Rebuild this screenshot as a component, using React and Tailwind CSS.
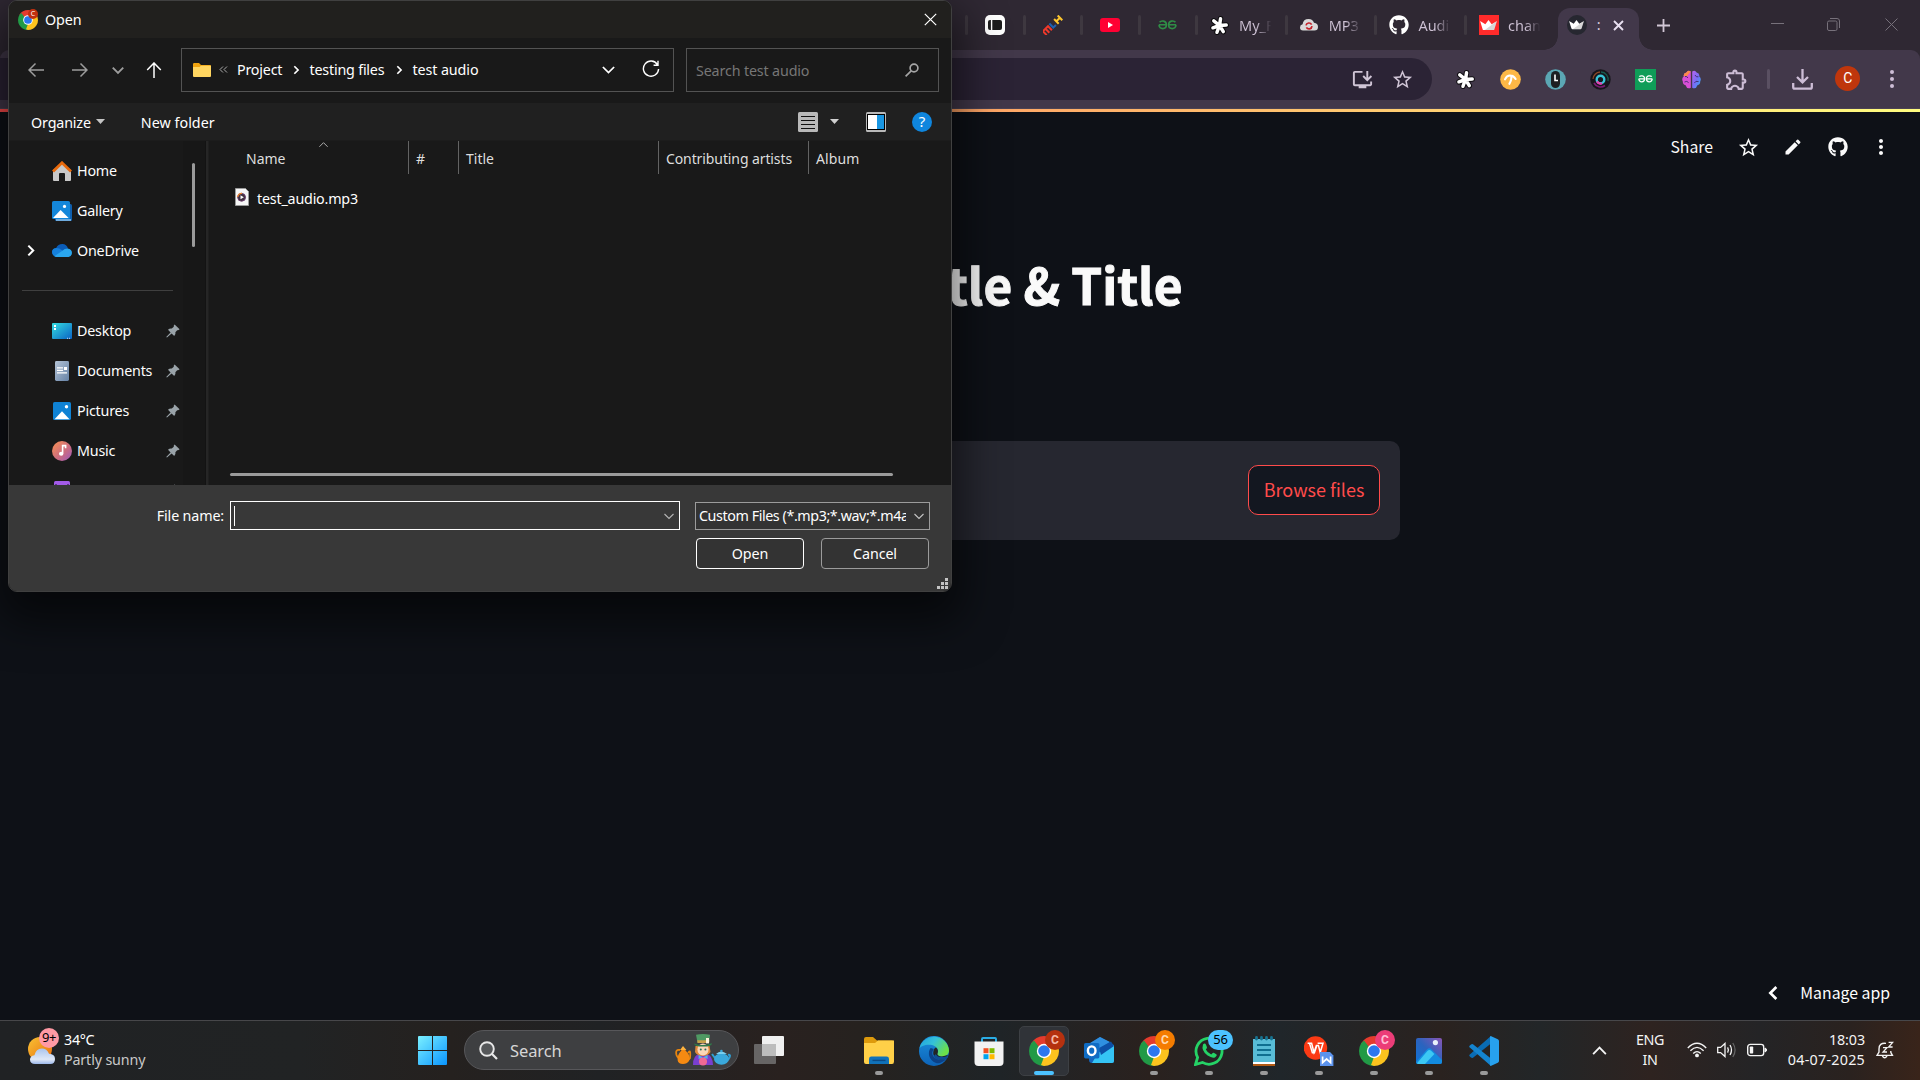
import React from "react";
import { FaGithub } from "react-icons/fa";
import { MdOutlineStarBorder, MdEdit, MdMoreVert, MdOutlineInstallDesktop, MdOutlineExtension } from "react-icons/md";

const ui = "font-['Noto_Sans',sans-serif]";
const src = "font-['Noto_Sans_CJK_SC',sans-serif]";

function Svg({ w, h = w, vb, className = "", children }) {
  return (
    <svg width={w} height={h} viewBox={vb || `0 0 ${w} ${h}`} fill="none" className={`block shrink-0 ${className}`}>
      {children}
    </svg>
  );
}

/* ---------- shared icons ---------- */

function Chrome({ size = 30 }) {
  return (
    <Svg w={size} vb="0 0 30 30">
      <path d="M15 15 L2.01 7.5 A15 15 0 0 1 27.99 7.5 Z" fill="#e33b2e" />
      <path d="M15 15 L27.99 7.5 A15 15 0 0 1 15 30 Z" fill="#fcc31e" />
      <path d="M15 15 L15 30 A15 15 0 0 1 2.01 7.5 Z" fill="#219a46" />
      <path d="M15 8 L28.2 8 L27.6 7 L15 5 Z" fill="#e33b2e" />
      <path d="M21.2 18.5 L15 30 L12 29 L15 21 Z" fill="#fcc31e" />
      <path d="M8.8 18.5 L2.01 7.5 L5 4.5 L10 11 Z" fill="#219a46" />
      <circle cx="15" cy="15" r="7.2" fill="#fff" />
      <circle cx="15" cy="15" r="5.8" fill="#2a77ee" />
    </Svg>
  );
}

function Folder({ w = 18 }) {
  return (
    <Svg w={w} h={(w * 14) / 18} vb="0 0 18 14">
      <path d="M0 1.2Q0 0 1.2 0H6L8 2H17Q18 2 18 3V13H0Z" fill="#f0a30f" />
      <path d="M0 4H6.5L8 2.8H18V13Q18 14 17 14H1Q0 14 0 13Z" fill="#ffd560" />
    </Svg>
  );
}

function Crown({ w = 16, fill = "#fff" }) {
  return (
    <Svg w={w} h={w * 0.62} vb="0 0 16 10">
      <path d="M0 1L5 4L8 0L11 4L16 1L13.5 9Q13.2 10 12.2 10H3.8Q2.8 10 2.5 9Z" fill={fill} />
      <path d="M8 7L16 1L13.5 9Q13.2 10 12.2 10H3.8Z" fill="#000" opacity=".16" />
    </Svg>
  );
}

function Splat({ size = 18 }) {
  return (
    <Svg w={size} vb="0 0 18 18">
      <g stroke="#000" strokeWidth="5.2" strokeLinecap="round" opacity=".75">
        <path d="M9 9L10 2.6M9 9L15.4 8.6M9 9L12.6 14.8M9 9L6.6 15.4M9 9L2.8 11.2M9 9L3.6 4.6" />
      </g>
      <g stroke="#fff" strokeWidth="3.3" strokeLinecap="round">
        <path d="M9 9L10 2.6M9 9L15.4 8.6M9 9L12.6 14.8M9 9L6.6 15.4M9 9L2.8 11.2M9 9L3.6 4.6" />
      </g>
    </Svg>
  );
}

function Geeks({ color, w = 19 }) {
  return (
    <Svg w={w} h={(w * 10) / 19} vb="0 0 19 10">
      <g stroke={color} strokeWidth="1.6">
        <path d="M1 4.8H8.4M1.6 2.2C3 .4 8.4 .2 8.4 4.8C8.4 9.8 1 10 1 4.8" />
        <path d="M18 4.8H10.6M17.4 2.2C16 .4 10.6 .2 10.6 4.8C10.6 9.8 18 10 18 4.8" />
      </g>
    </Svg>
  );
}

function Chev({ dir = "down", w = 12, sw = 1.6, className = "" }) {
  const d = { down: "M1.5 4L6 8.5L10.5 4", up: "M1.5 8.5L6 4L10.5 8.5", right: "M4 1.5L8.5 6L4 10.5", left: "M8.5 1.5L4 6L8.5 10.5" }[dir];
  return (
    <Svg w={w} vb="0 0 12 12" className={className}>
      <path d={d} stroke="currentColor" strokeWidth={sw} />
    </Svg>
  );
}

/* ---------- browser ---------- */

function Tab({ wide, label, children }) {
  return (
    <div className={`flex h-[50px] shrink-0 items-center ${wide ? "w-[89.7px]" : "w-[57.5px]"}`}>
      <div className="h-5 w-[3px] shrink-0 rounded-full bg-[#3e3840]" />
      <div className={`flex w-5 shrink-0 justify-center ${wide ? "ml-[11.5px]" : "ml-[17px]"}`}>{children}</div>
      {label && (
        <span className="ml-[9.5px] w-[34px] bg-[linear-gradient(90deg,#cfc3d6_50%,#cfc3d600_95%)] bg-clip-text text-[14.5px] leading-6 whitespace-nowrap text-transparent">
          {label}
        </span>
      )}
    </div>
  );
}

function TabStrip() {
  return (
    <div className="flex h-[50px] bg-[#2f2833] pl-[965px]">
      <Tab>
        <Svg w={20}>
          <rect width="20" height="20" rx="5" fill="#fff" />
          <rect x="3" y="5" width="14" height="10" rx="2" fill="#1c1c1c" />
          <path d="M6.6 5V15" stroke="#fff" strokeWidth="1.4" />
        </Svg>
      </Tab>
      <Tab>
        <Svg w={20}>
          <g transform="rotate(-44 10 10)" strokeWidth="2">
            <path d="M-1.6 13V7.4H5.6V13M2 7.4V13" stroke="#f0392b" />
            <path d="M8.4 6.4V12H12.2" stroke="#1d5fb0" />
            <path d="M15 6.4V13M20 6.4V13M15 9.7H20" stroke="#fdc62e" />
          </g>
        </Svg>
      </Tab>
      <Tab>
        <Svg w={20} h={14}>
          <rect width="20" height="14" rx="3" fill="#ff0033" />
          <path d="M8 4L13 7L8 10Z" fill="#fff" />
        </Svg>
      </Tab>
      <Tab><Geeks color="#2f8d46" /></Tab>
      <Tab wide label="My_F"><Splat size={19} /></Tab>
      <Tab wide label="MP3">
        <Svg w={20} h={14}>
          <path d="M4 12.5Q1 12.3 1 9.4Q1 6.8 3.6 6.2Q4.2 1 9.6 1Q13.8 1 15 4.8Q19 5.4 19 9Q19 12.5 15.4 12.5Z" fill="#d9d9d9" />
          <path d="M7 7.4A3 3 0 0 1 12.6 6.6M13 8.2A3 3 0 0 1 7.4 9.4" stroke="#c4232a" strokeWidth="1.7" />
        </Svg>
      </Tab>
      <Tab wide label="Audi"><FaGithub className="block size-5 text-white" /></Tab>
      <Tab wide label="chan">
        <div className="flex size-5 items-center justify-center bg-[#ff2b2b]"><Crown w={17} /></div>
      </Tab>
      <div className="-ml-[10px] flex h-full w-[110px] shrink-0 items-end">
        <div className="size-[14px] bg-[radial-gradient(circle_at_0_0,#2f2833_13.5px,#42384a_14px)]" />
        <div className="flex h-[42px] w-[81px] items-center rounded-t-[12px] bg-[#42384a] pb-[8px]">
          <div className="ml-[9px] flex size-5 shrink-0 items-center justify-center rounded-full bg-[#262730]"><Crown w={15} /></div>
          <span className="ml-[10px] w-[5px] text-[14.5px] text-[#d8cddf]">:</span>
          <Svg w={11} className="ml-[11.5px]">
            <path d="M1 1L10 10M10 1L1 10" stroke="#e8dff0" strokeWidth="1.9" />
          </Svg>
        </div>
        <div className="size-[14px] bg-[radial-gradient(circle_at_100%_0,#2f2833_13.5px,#42384a_14px)]" />
      </div>
      <Svg w={13} className="mt-[18.5px] ml-[3.5px]">
        <path d="M6.5 0V13M0 6.5H13" stroke="#d2c7d6" strokeWidth="1.8" />
      </Svg>
      <div className="mr-[22px] ml-auto flex h-[49px] items-center text-[#77717b]">
        <Svg w={13}><path d="M0 5.5H13" stroke="currentColor" /></Svg>
        <Svg w={13} className="ml-[43px]">
          <rect x=".5" y="3" width="9.5" height="9.5" rx="1.5" stroke="currentColor" />
          <path d="M3 .5H10Q12.5 .5 12.5 3V10" stroke="currentColor" />
        </Svg>
        <Svg w={13} className="ml-[45px]"><path d="M.5 .5L12.5 12.5M12.5 .5L.5 12.5" stroke="currentColor" /></Svg>
      </div>
    </div>
  );
}

function Slot({ children }) {
  return <div className="flex w-[45.2px] shrink-0 items-center justify-center">{children}</div>;
}

function AddressRow() {
  return (
    <div className="bg-[#2f2833]">
      <div className="flex h-[59px] items-center rounded-t-[9px] border-b border-[#4c4353] bg-[#42384a]">
        <div className="flex h-[42px] w-[1432px] shrink-0 items-center justify-end rounded-r-full bg-[#2b2335] pr-[18px] text-[#d0c5d6]">
          <MdOutlineInstallDesktop className="mr-[17px] size-[23px]" />
          <MdOutlineStarBorder className="size-[23px]" />
        </div>
        <div className="ml-[10.5px] flex">
          <Slot><Splat size={19} /></Slot>
          <Slot>
            <Svg w={21}>
              <circle cx="10.5" cy="10.5" r="10.3" fill="#fdb846" />
              <path d="M5 10.4Q7 6.2 10.6 6.6Q13.6 6.6 15.6 10M11.2 7Q12 10 9.4 14.8" stroke="#fff" strokeWidth="2.1" strokeLinecap="round" />
            </Svg>
          </Slot>
          <Slot>
            <Svg w={21}>
              <circle cx="10.5" cy="10.5" r="10.3" fill="#5ba7b4" />
              <rect x="6" y="2" width="9" height="17" rx="4.5" fill="#1d1f22" />
              <path d="M10 5.5V11.5H13" stroke="#fff" strokeWidth="1.6" />
            </Svg>
          </Slot>
          <Slot>
            <Svg w={21}>
              <circle cx="10.5" cy="10.5" r="10.2" fill="#17161c" />
              <path d="M3 10A7.5 7.5 0 0 1 10 3" stroke="#8a4726" strokeWidth="1.3" />
              <path d="M11 3A7.5 7.5 0 0 1 18 12" stroke="#17594f" strokeWidth="1.3" />
              <path d="M4 14A7.5 7.5 0 0 0 15 16.5" stroke="#7a1c74" strokeWidth="1.6" />
              <circle cx="10.5" cy="10.5" r="3.8" stroke="#38c6d8" strokeWidth="2.4" />
              <path d="M7 12.4A4 4 0 0 0 12 14.2" stroke="#e43fb0" strokeWidth="2.2" />
            </Svg>
          </Slot>
          <Slot>
            <div className="flex size-[21px] items-center justify-center bg-[#0f9d58]"><Geeks color="#fff" w={15} /></div>
          </Slot>
          <Slot>
            <Svg w={19}>
              <defs>
                <linearGradient id="brain" x1="0" y1="0" x2="1" y2="1">
                  <stop offset="0" stopColor="#b865f0" /><stop offset=".5" stopColor="#7a6cf5" /><stop offset="1" stopColor="#26b6f0" />
                </linearGradient>
              </defs>
              <path d="M8.8 1.5Q6 -.6 4.4 2.4Q1.2 3 1.8 6.2Q-.8 8.6 .8 11.4Q.6 14.6 3.6 15.2Q5 19.6 8.8 17.8Z" fill="#d94fd6" />
              <path d="M1.8 6.2Q1.2 3 4.4 2.4Q6 -.6 8.8 1.5L5 6Z" fill="#fb8a4a" />
              <path d="M10.2 1.5Q13 -.6 14.6 2.4Q17.8 3 17.2 6.2Q19.8 8.6 18.2 11.4Q18.4 14.6 15.4 15.2Q14 19.6 10.2 17.8Z" fill="url(#brain)" />
              <path d="M3 6.5Q5 6 6 8M2.5 12Q5 10.5 6.6 12.6M13 5Q14 7.5 16.4 6.8M12.4 13Q13.4 10.4 16.6 11.6" stroke="#3b2c6b" strokeWidth=".9" />
            </Svg>
          </Slot>
          <Slot><MdOutlineExtension className="size-[25px] text-[#cdbdd6]" /></Slot>
        </div>
        <div className="ml-[8.5px] h-5 w-[3px] rounded-full bg-[#5a5062]" />
        <Svg w={21} className="ml-[22px] text-[#cdbdd6]">
          <path d="M10.5 0V13M5 8L10.5 13.3L16 8M1.2 14V18Q1.2 19.7 2.8 19.7H18.2Q19.8 19.7 19.8 18V14" stroke="currentColor" strokeWidth="2.3" />
        </Svg>
        <div className="mb-[2px] ml-[22px] flex size-[25px] items-center justify-center rounded-full bg-[#bf360c] font-[Roboto,sans-serif] text-sm leading-none text-white">C</div>
        <Svg w={6} h={20} className="mb-px ml-[29px]">
          <g fill="#cdbdd6"><circle cx="3" cy="3" r="2" /><circle cx="3" cy="10" r="2" /><circle cx="3" cy="17" r="2" /></g>
        </Svg>
      </div>
    </div>
  );
}

function StreamlitPage() {
  return (
    <div className={`flex h-[911px] flex-col bg-[#0e1117] ${src}`}>
      <div className="h-[3px] shrink-0 bg-[linear-gradient(90deg,#ff4b4b,#fffd80)]" />
      <div className="flex h-[70px] items-center justify-end pr-[27px] text-[#fafafa]">
        <span className="mr-[24px] text-[15.8px] leading-6">Share</span>
        <MdOutlineStarBorder className="mr-[23px] size-[23px]" />
        <MdEdit className="mr-[25px] size-[20px]" />
        <FaGithub className="mr-[21px] size-[20px]" />
        <MdMoreVert className="size-[24px]" />
      </div>
      <h1 className="mt-[72px] ml-[947px] text-[49.5px] leading-[60px] font-bold whitespace-nowrap text-[#fafafa] [-webkit-text-stroke:1px_#fafafa]">tle &amp; Title</h1>
      <div className="mt-[127px] ml-[520px] flex h-[99px] w-[880px] shrink-0 items-center justify-end rounded-[10px] bg-[#262730] pr-5">
        <button className="-mt-px h-[50px] w-[132px] rounded-[10px] border border-[#ff4b4b] bg-[#131720] pb-[3px] text-[18px] leading-6 text-[#ff4b4b]">Browse files</button>
      </div>
      <div className="mt-auto mr-[30px] mb-[12px] flex h-[30px] items-center justify-end text-white">
        <Chev dir="left" w={16} sw={2} className="mr-[19px]" />
        <span className="text-[15.8px] leading-6">Manage app</span>
      </div>
    </div>
  );
}

/* ---------- file dialog ---------- */

function HomeIcon() {
  return (
    <Svg w={20}>
      <path d="M1 9L10 2L19 9V19Q19 20 18 20H13V13Q13 12 12 12H8Q7 12 7 13V20H2Q1 20 1 19Z" fill="#c9c9c9" />
      <path d="M1 10.5L10 1.8L19 10.5" stroke="#e8690b" strokeWidth="2.8" />
    </Svg>
  );
}

function PictureIcon({ size = 18 }) {
  return (
    <Svg w={size} vb="0 0 18 18">
      <rect width="18" height="18" rx="1.6" fill="#0f82d4" />
      <path d="M1.5 17.3L9 9.2L16.5 17.3Z" fill="#fff" />
      <circle cx="13.5" cy="4.8" r="1.7" fill="#fff" />
    </Svg>
  );
}

function GalleryIcon() {
  return (
    <Svg w={20}>
      <rect x="3" y="3" width="17" height="17" rx="1.5" fill="#0f5fae" />
      <path d="M4 19H19" stroke="#8fc4ee" strokeWidth="1.6" />
      <rect width="18" height="18" rx="1.6" fill="#1487da" />
      <path d="M1 17L8.6 9L16.6 17Z" fill="#fff" />
      <circle cx="12.5" cy="5.4" r="1.6" fill="#fff" />
    </Svg>
  );
}

function OneDriveIcon() {
  return (
    <Svg w={20} h={13} className="-mt-px">
      <path d="M4 12Q0 11.5 0 8Q.3 4.6 4 4.2Q6 0 10.4 0Q14.6 .2 16 4.4L10 9Z" fill="#0a5cb8" />
      <path d="M0 8Q.3 4.2 4.4 4Q7.4 4 9.6 6L15 9.4L4.6 13Q.4 12.6 0 8Z" fill="#1580dc" />
      <path d="M2.4 12.2L10.4 6.8Q12.4 4.4 15.6 4.4Q20 5 20 9Q19.6 12.6 16.6 13H4.4Q3.2 13 2.4 12.2Z" fill="#2aa6ee" />
    </Svg>
  );
}

function DesktopIcon() {
  return (
    <Svg w={20} h={16}>
      <defs><linearGradient id="desk" x1="0" y1="0" x2="1" y2="1"><stop stopColor="#35dde0" /><stop offset="1" stopColor="#0a62c4" /></linearGradient></defs>
      <rect width="20" height="16" rx="1" fill="url(#desk)" />
      <path d="M2 2H4V4H2ZM2 5H4V7H2Z" fill="#fff" />
      <path d="M15 15.3H16M17 15.3H18" stroke="#cde" />
    </Svg>
  );
}

function DocIcon() {
  return (
    <Svg w={14} h={20}>
      <defs><linearGradient id="doc" x1="0" y1="0" x2="1" y2="1"><stop stopColor="#b4c3d6" /><stop offset="1" stopColor="#6582a6" /></linearGradient></defs>
      <rect width="14" height="20" rx="1.4" fill="url(#doc)" />
      <path d="M2 6.8H8M2 9.3H8M2 11.8H12" stroke="#fff" strokeWidth="1.2" />
      <rect x="9" y="6" width="3" height="3" fill="#fff" />
    </Svg>
  );
}

function MusicIcon() {
  return (
    <Svg w={20}>
      <defs><linearGradient id="mus" x1="0" y1="0" x2="1" y2="1"><stop stopColor="#fa9150" /><stop offset=".6" stopColor="#c96b83" /><stop offset="1" stopColor="#9a57c0" /></linearGradient></defs>
      <circle cx="10" cy="10" r="10" fill="url(#mus)" />
      <path d="M10.6 12.5V4.6H13.6V7.2" stroke="#fff" strokeWidth="1.6" />
      <ellipse cx="9.2" cy="12.8" rx="2.2" ry="2" fill="#fff" />
    </Svg>
  );
}

function VideoIcon() {
  return (
    <Svg w={16} h={20}>
      <rect width="16" height="20" rx="1.5" fill="#a35be8" />
      <path d="M2 3V18M14 3V18" stroke="#4f2a7a" strokeWidth="1.6" strokeDasharray="2 2" />
    </Svg>
  );
}

function Pin() {
  return (
    <Svg w={14}>
      <path d="M8.6 .4L13.6 5.2Q12.6 6.4 11.2 6.2L9.4 8.2Q10 10.4 8.2 12L5.6 9.4L1 13.6L.2 13L4.6 8.4L2 5.8Q3.6 4.2 5.8 4.6L7.8 2.8Q7.4 1.4 8.6 .4Z" fill="#9aa3a9" />
    </Svg>
  );
}

function NavItem({ icon, label, pin, expand }) {
  return (
    <div className="flex h-10 shrink-0 items-center pr-[3px]">
      <div className="flex w-[39px] pl-[11px] text-white">{expand && <Chev dir="right" w={13} sw={1.9} />}</div>
      <div className="flex w-5 justify-center">{icon}</div>
      <span className="ml-[5px] text-[14.3px] leading-5 tracking-[-0.2px] text-[#fdfdfd]">{label}</span>
      {pin && <div className="ml-auto"><Pin /></div>}
    </div>
  );
}

function Column({ label, w, pad, sort, track = "" }) {
  return (
    <div className={`flex h-[33px] shrink-0 flex-col border-r border-[#636363] ${w} ${pad}`}>
      <div className="flex h-[6px] justify-end">
        {sort && <Chev dir="up" w={11} sw={1} className="mt-[-2px] mr-[79px] text-[#b8b8b8]" />}
      </div>
      <span className={`mt-[2px] text-[14px] leading-5 whitespace-nowrap text-[#dedede] ${track}`}>{label}</span>
    </div>
  );
}

function Dialog() {
  return (
    <div className={`absolute top-0 left-2 flex h-[592px] w-[944px] flex-col overflow-hidden rounded-[9px] border border-[#404040] bg-[#191919] shadow-[0_20px_44px_10px_rgba(0,0,0,0.55)] ${ui}`}>
      <div className="flex h-[37px] shrink-0 items-center bg-[#21201e] pr-[14.5px] pl-[9px]">
        <div className="relative">
          <Chrome size={20} />
          <div className="absolute -top-px left-[10px] flex size-[10px] items-center justify-center rounded-full bg-[#c2300f] text-[7px] leading-none text-white">C</div>
        </div>
        <span className="ml-[7px] text-[14.3px] tracking-[-0.1px] text-white">Open</span>
        <Svg w={13} className="ml-auto"><path d="M.8 .8L12.2 12.2M12.2 .8L.8 12.2" stroke="#fff" strokeWidth="1.2" /></Svg>
      </div>

      <div className="flex h-[65px] shrink-0 items-center pr-[12px] pb-px pl-[19px]">
        <Svg w={16} className="text-[#9d9d9d]"><path d="M16 8H1M7.5 1.5L1 8L7.5 14.5" stroke="currentColor" strokeWidth="1.5" /></Svg>
        <Svg w={16} className="ml-[28px] text-[#9d9d9d]"><path d="M0 8H15M8.5 1.5L15 8L8.5 14.5" stroke="currentColor" strokeWidth="1.5" /></Svg>
        <Chev w={14} sw={1.6} className="ml-[23px] text-[#9d9d9d]" />
        <Svg w={16} className="ml-[21px] text-white"><path d="M8 16V1M1.2 8L8 1L14.8 8" stroke="currentColor" strokeWidth="1.5" /></Svg>
        <div className="ml-[19px] flex h-[44px] w-[493px] shrink-0 items-center border border-[#535353] pr-[13px] pb-px pl-[11px] text-[14.3px] text-white">
          <Folder />
          <Svg w={9} h={7} className="ml-[8px]"><path d="M4 .5L1 3.5L4 6.5M8 .5L5 3.5L8 6.5" stroke="#aaa" /></Svg>
          <span className="ml-[9px] w-[47px] tracking-[-0.2px] whitespace-nowrap">Project</span>
          <Chev dir="right" w={10} sw={2} className="ml-[7px]" />
          <span className="ml-[8.5px] w-[76px] tracking-[-0.2px] whitespace-nowrap">testing files</span>
          <Chev dir="right" w={10} sw={2} className="ml-[8px]" />
          <span className="ml-[9px] tracking-[-0.1px] whitespace-nowrap">test audio</span>
          <Chev w={15} sw={1.4} className="ml-auto" />
          <Svg w={18} className="mb-px ml-[26px]">
            <path d="M15.4 4.5A7.6 7.6 0 1 0 16.6 9M16 .8V5.2H11.6" stroke="#fff" strokeWidth="1.4" />
          </Svg>
        </div>
        <div className="ml-auto flex h-[44px] w-[253px] items-center border border-[#535353] pr-[19px] pl-[9px]">
          <span className="pt-px text-[14.3px] tracking-[-0.15px] text-[#767676]">Search test audio</span>
          <Svg w={14} className="ml-auto"><circle cx="9" cy="5" r="3.9" stroke="#a5a5a5" strokeWidth="1.7" /><path d="M6.2 7.8L.6 13.4" stroke="#a5a5a5" strokeWidth="1.7" /></Svg>
        </div>
      </div>

      <div className="flex h-[38px] shrink-0 items-center border-b border-[#1c1c1c] bg-[#202020] pr-[19px] pl-[22px] text-[14.3px] text-white">
        <span className="pt-[2px] tracking-[-0.15px]">Organize</span>
        <Svg w={9} h={5} className="ml-[5px]"><path d="M0 0H9L4.5 5Z" fill="#c4c4c4" /></Svg>
        <span className="ml-[36px] pt-[2px] tracking-[0.02px]">New folder</span>
        <Svg w={20} className="ml-auto">
          <rect width="20" height="20" rx="1.5" fill="#b9b9b9" />
          <path d="M3 4.5H17M3 8.5H17M3 12.5H17M3 16.5H17" stroke="#111" />
        </Svg>
        <Svg w={9} h={5} className="ml-[12px]"><path d="M0 0H9L4.5 5Z" fill="#d0d0d0" /></Svg>
        <Svg w={20} className="ml-[27px]">
          <rect width="20" height="20" rx="1.5" fill="#b9b9b9" />
          <rect x="1.5" y="2.5" width="17" height="15" fill="#fff" stroke="#000" />
          <rect x="11" y="3" width="7" height="14" fill="#1996e2" />
        </Svg>
        <div className="ml-[26px] flex size-5 items-center justify-center rounded-full bg-[#0f86de] text-[15px] leading-none text-white">?</div>
      </div>

      <div className="flex h-[344px] shrink-0">
        <div className="flex h-full w-[174px] shrink-0 flex-col overflow-hidden pt-[9.5px] pl-[4px]">
          <NavItem icon={<HomeIcon />} label="Home" />
          <NavItem icon={<GalleryIcon />} label="Gallery" />
          <NavItem icon={<OneDriveIcon />} label="OneDrive" expand />
          <div className="flex h-10 shrink-0 items-center"><div className="mb-px ml-[9px] h-px w-[151px] bg-[#3f3f3f]" /></div>
          <NavItem icon={<DesktopIcon />} label="Desktop" pin />
          <NavItem icon={<DocIcon />} label="Documents" pin />
          <NavItem icon={<PictureIcon />} label="Pictures" pin />
          <NavItem icon={<MusicIcon />} label="Music" pin />
          <NavItem icon={<VideoIcon />} label="" pin />
        </div>
        <div className="h-full w-[22px] shrink-0 bg-[#171717] pt-[22px] pl-[9px]"><div className="h-[84px] w-[3px] rounded-full bg-[#9a9a9a]" /></div>
        <div className="h-full w-[4px] shrink-0 border-x border-l-[#131313] border-r-[#1f1f1f] bg-[#262626]" />
        <div className="flex min-w-0 flex-1 flex-col">
          <div className="flex">
            <Column label="Name" w="w-[200px]" pad="pl-[37px]" sort />
            <Column label="#" w="w-[50px]" pad="pl-[7px]" />
            <Column label="Title" w="w-[200px]" pad="pl-[7px]" />
            <Column label="Contributing artists" w="w-[150px]" pad="pl-[7px]" track="tracking-[-0.1px]" />
            <span className="mt-[8px] ml-[7px] text-[14px] leading-5 tracking-[0.1px] text-[#dedede]">Album</span>
          </div>
          <div className="mt-[13px] flex h-[22px] items-center pl-[26px]">
            <Svg w={14} h={18} className="-mt-[2px]">
              <path d="M.5 .5H10.5L13.5 3.5V17.5H.5Z" fill="#f6f6f6" stroke="#9a9a9a" />
              <circle cx="6.6" cy="9.3" r="3.9" fill="#41323f" stroke="#6b3f6e" strokeWidth="1" />
              <path d="M2.7 9A3.9 3.9 0 0 1 7 5.4" stroke="#e9822d" strokeWidth="1.3" />
              <path d="M5.5 7.3L8.9 9.3L5.5 11.3Z" fill="#fff" />
            </Svg>
            <span className="ml-[8px] pt-[2px] text-[14.3px] tracking-[-0.2px] text-white">test_audio.mp3</span>
          </div>
          <div className="mt-auto mb-[9px] ml-[21px] h-[3px] w-[663px] rounded-full bg-[#9a9a9a]" />
        </div>
      </div>

      <div className="flex min-h-0 flex-1 flex-col bg-[#383838] pt-[16px] text-[14.3px] text-white">
        <div className="flex h-[29px] shrink-0 items-center">
          <span className="w-[215px] text-right tracking-[-0.15px]">File name:</span>
          <div className="ml-[6px] flex h-[29px] w-[450px] items-center justify-between border border-white pr-[4px] pl-[3px]">
            <div className="h-5 w-px bg-white" />
            <Chev w={12} sw={1.1} className="text-[#b5b5b5]" />
          </div>
          <div className="ml-[15px] flex h-[28px] w-[235px] items-center justify-between border border-[#9b9b9b] bg-[#333] pr-[4px] pl-[3px]">
            <span className="w-[207px] overflow-hidden tracking-[-0.42px] whitespace-nowrap">Custom Files (*.mp3;*.wav;*.m4a</span>
            <Chev w={12} sw={1.1} className="text-[#c5c5c5]" />
          </div>
        </div>
        <div className="mt-[8px] flex shrink-0 pl-[687px]">
          <button className="h-[31px] w-[108px] rounded-[4px] border border-white bg-[#333] tracking-[-0.1px]">Open</button>
          <button className="ml-[17px] h-[31px] w-[108px] rounded-[4px] border border-[#9b9b9b] bg-[#333] tracking-[-0.1px]">Cancel</button>
        </div>
        <Svg w={11} className="mt-[9px] ml-[928px]">
          <path d="M8 0h3v3h-3zM4 4h3v3h-3zM8 4h3v3h-3zM0 8h3v3h-3zM4 8h3v3h-3zM8 8h3v3h-3z" fill="#c4c4c4" />
        </Svg>
      </div>
    </div>
  );
}

/* ---------- taskbar ---------- */

function Task({ active, running, children }) {
  return (
    <div className="flex w-[55px] shrink-0 justify-center">
      <div className={`flex h-[50px] w-[50px] flex-col items-center rounded-[5px] ${active ? "border border-[#3d4044] bg-[#303338] pt-[9px]" : "pt-[10px]"}`}>
        <div className="relative flex h-[30px] w-[30px] items-center justify-center">{children}</div>
        {(active || running) && <div className={`mt-[5px] h-[4px] shrink-0 rounded-full ${active ? "w-5 bg-[#4cc2ff]" : "w-2 bg-[#9a9a9a]"}`} />}
      </div>
    </div>
  );
}

function Badge({ className, children }) {
  return <div className={`absolute -top-[6px] left-[16px] flex h-5 items-center justify-center rounded-full leading-none ${className}`}>{children}</div>;
}

function HatterArt() {
  return (
    <Svg w={56} h={32}>
      <path d="M5 16Q0 15 1.5 21Q3 25 6 25M13 19Q16 14 15 24L13 26" stroke="#e8850e" strokeWidth="1.8" />
      <path d="M8 13L11 17Q16 22 14 27Q12 30 8 30Q3 30 2.6 26Q2.6 20 6 17Z" fill="#f58a12" />
      <path d="M5 16L8 12L11.4 16Z" fill="#ffb23d" />
      <path d="M37 20L40 24M53 21Q57 20 53 26" stroke="#2f9fd4" strokeWidth="2" />
      <ellipse cx="46.5" cy="25" rx="7.5" ry="5.8" fill="#3aa9dc" />
      <path d="M41 20Q46 15 52 20Z" fill="#7bd0ee" /><circle cx="46.4" cy="17" r="1.3" fill="#3aa9dc" />
      <path d="M18 31Q18 21 24 20.5H32Q37.5 21 38 31Z" fill="#7a3fd0" />
      <path d="M20.5 12H34.5L35.5 18Q33 22 28 22Q22 22 20 18Z" fill="#e08a3c" />
      <ellipse cx="28" cy="15.6" rx="5.6" ry="6" fill="#fbd7b8" />
      <circle cx="25.8" cy="15.4" r="1" fill="#2c6b5b" /><circle cx="30.4" cy="15.4" r="1" fill="#2c6b5b" />
      <path d="M21 .8Q28 -.6 35 .8L34 9H22.6Z" fill="#4f9a63" />
      <path d="M22.2 6.2H34.4L34 9H22.6Z" fill="#c9a04a" />
      <path d="M19 9.4Q28 12.6 37 9.2Q37 12.6 28 12.6Q20 12.6 19 9.4Z" fill="#2f7a4a" />
      <path d="M31 4H34V9.4H31Z" fill="#fff3da" />
      <path d="M23.6 21L28 23.4L32.6 21V25L28 23.6L23.6 25Z" fill="#4fb5e8" />
      <circle cx="28" cy="27.6" r="4" fill="#ef6a94" />
    </Svg>
  );
}

function Taskbar() {
  return (
    <div className={`flex h-[60px] items-center border-t border-[#47474a] bg-[linear-gradient(90deg,#202224_0px,#212324_300px,#25211f_450px,#202224_600px,#29211f_780px,#26221f_860px,#1f2427_1000px,#2a211e_1150px,#20262a_1280px,#2a221f_1440px,#222628_1540px,#2e2320_1650px,#242426_1760px,#2a221f_1850px,#39241a_1920px)] pb-px ${ui}`}>
      <div className="flex w-[418px] shrink-0 items-center pl-[28px]">
        <div className="relative mt-px">
          <Svg w={27} h={27}>
            <defs>
              <linearGradient id="sun" x1="0" y1="0" x2="1" y2="1"><stop stopColor="#f8c234" /><stop offset="1" stopColor="#ea6d0e" /></linearGradient>
              <linearGradient id="cloud" x1="0" y1="0" x2="0" y2="1"><stop stopColor="#a9c4ee" /><stop offset=".7" stopColor="#dfe8f7" /><stop offset="1" stopColor="#9cb8ea" /></linearGradient>
            </defs>
            <circle cx="12" cy="12" r="12" fill="url(#sun)" />
            <path d="M7 27Q2 27 2 22.6Q2 18.8 6.4 18.2Q8 11.4 13.8 11.4Q19 11.4 21 16.8Q27 17 27 22Q27 27 22.4 27Z" fill="url(#cloud)" />
          </Svg>
          <div className="absolute -top-[9px] left-[11px] flex size-5 items-center justify-center rounded-full bg-[#ff99a4] text-[13px] tracking-[-0.5px] text-black">9+</div>
        </div>
        <div className="ml-[9px] flex flex-col pb-px text-[14.3px] leading-5 whitespace-nowrap">
          <span className="tracking-[-0.3px] text-white">34°C</span>
          <span className="tracking-[-0.15px] text-[#c9c9c9]">Partly sunny</span>
        </div>
      </div>
      <Svg w={29} className="mt-px">
        <defs><linearGradient id="win" x1="0" y1="0" x2="1" y2="1"><stop stopColor="#7bf0ff" /><stop offset="1" stopColor="#0a95ff" /></linearGradient></defs>
        <path d="M1 0H14V14H0V1Q0 0 1 0ZM15 0H28Q29 0 29 1V14H15ZM0 15H14V29H1Q0 29 0 28ZM15 15H29V28Q29 29 28 29H15Z" fill="url(#win)" />
      </Svg>
      <div className="ml-[17px] flex h-[40px] w-[275px] shrink-0 items-center rounded-full border border-[#57575a] bg-[#3e3f41] pr-[7px] pl-[14px]">
        <Svg w={19}><circle cx="8" cy="8" r="6.8" stroke="#e8e8e8" strokeWidth="1.9" fill="#56585a" /><path d="M12.8 12.8L18 18" stroke="#e8e8e8" strokeWidth="2.2" /></Svg>
        <span className="ml-[12px] pt-px text-[16.5px] leading-5 tracking-[-0.1px] text-[#d6d6d6]">Search</span>
        <div className="ml-auto"><HatterArt /></div>
      </div>
      <Svg w={30} h={28} className="ml-[15px]">
        <rect x="8" width="22" height="20" rx="1" fill="#f0f0f0" />
        <rect y="8" width="22" height="20" rx="1" fill="#777" opacity=".8" />
        <rect x="8" y="8" width="14" height="12" fill="#bdbdbd" />
      </Svg>
      <div className="mt-px ml-[67.5px] flex">
        <Task running>
          <Svg w={30} h={27}>
            <path d="M0 2Q0 0 2 0H9L13 3.6H28Q30 3.6 30 6V20H0Z" fill="#dd9a0c" />
            <path d="M0 6H11L14 3.6H30V24.5Q30 27 28 27H2Q0 27 0 25Z" fill="#ffd048" />
            <path d="M5 27V22Q5 19.6 7.4 19.6H22.6Q25 19.6 25 22V27Z" fill="#1172b9" />
            <path d="M8.5 23.4H21.5" stroke="#0b4a85" strokeWidth="1.4" />
          </Svg>
        </Task>
        <Task>
          <Svg w={30}>
            <defs>
              <linearGradient id="e1" x1="0" y1="0" x2="1" y2=".5"><stop stopColor="#1fa0e0" /><stop offset=".5" stopColor="#35c1d8" /><stop offset="1" stopColor="#6be04a" /></linearGradient>
              <linearGradient id="e2" x1="0" y1="0" x2="0" y2="1"><stop stopColor="#1b8fdc" /><stop offset="1" stopColor="#0d63b8" /></linearGradient>
            </defs>
            <circle cx="15" cy="15" r="15" fill="url(#e2)" />
            <path d="M.4 12.5A15 15 0 0 1 30 14.4C30 18.8 26.4 20.4 23 20.4C20 20.4 18 19.4 18 18C18 17 19 16.6 19 14.6C18.6 10.6 14 8.8 10 8.8C5 8.8 1.4 11 .4 12.5Z" fill="url(#e1)" />
            <path d="M11.6 12C8.4 16 9.4 24 17 27Q22 28.4 27.6 22.8C24 24.8 17 24 14.4 20.4Q12 17 14.8 13Z" fill="#0c4187" />
            <path d="M18.6 17.4C18 19 20 20.4 23 20.4L28.8 19L27.6 22.8C22 24.6 16 23.4 14.4 18.6C13.8 15.6 15.2 12 17 11.6C19 13 19.4 15.6 18.6 17.4Z" fill="#222426" />
            <path d="M14.4 20.4C18 24 24 24 27.6 22.8L29 19.4C26 21 22 21.6 19 20.4L16.6 18.2Z" fill="#0e4d95" />
          </Svg>
        </Task>
        <Task>
          <Svg w={30}>
            <path d="M8 7V3Q8 2 9 2H21Q22 2 22 3V7" stroke="#2aace4" strokeWidth="2" />
            <path d="M.5 5.4H29.5V26Q29.5 30 25.5 30H4.5Q.5 30 .5 26Z" fill="#f2f2f2" />
            <path d="M9.5 12.2h5v5h-5z" fill="#f25022" /><path d="M15.5 12.2h5v5h-5z" fill="#7fba00" />
            <path d="M9.5 18.2h5v5h-5z" fill="#00a4ef" /><path d="M15.5 18.2h5v5h-5z" fill="#ffb900" />
          </Svg>
        </Task>
        <Task active>
          <Chrome />
          <Badge className="w-5 bg-[#b5310f] font-[Roboto,sans-serif] text-[12px] font-bold text-[#f4b9a6]">C</Badge>
        </Task>
        <Task>
          <Svg w={30} h={27}>
            <path d="M4 8L16 0L30 8V24Q30 26 28 26H8Q5 26 5 23Z" fill="#1464bd" />
            <path d="M6 6L16 0L26 5L12 14Z" fill="#2f8fe0" />
            <path d="M14 16L30 8V24Q30 26 28 26H8Z" fill="#35c4f5" />
            <path d="M15 11L27 4.6L30 9L17 18Z" fill="#0d4fa6" />
            <rect y="6" width="15.4" height="15.4" rx="1.6" fill="#0f6cc4" />
            <ellipse cx="7.7" cy="13.7" rx="3.8" ry="4.3" stroke="#fff" strokeWidth="2.4" />
          </Svg>
        </Task>
        <Task running>
          <Chrome />
          <Badge className="w-5 bg-[#f57c00] font-[Roboto,sans-serif] text-[12px] font-bold text-[#ffd9ae]">C</Badge>
        </Task>
        <Task running>
          <Svg w={30}>
            <path d="M1.5 28.5L3.6 21.4A13 13 0 1 1 8.4 26.4Z" stroke="#25d366" strokeWidth="2.8" />
            <path d="M9 8.4Q11 6.4 12 8.8L13 11.2Q13.2 12 11.8 13.4Q13.6 16.8 17.2 18.4Q18.8 16.4 19.8 16.8L22.6 18.4Q23.4 19.4 21.2 21.2Q18.6 22.8 13.6 19.6Q7 14.6 9 8.4Z" fill="#25d366" />
          </Svg>
          <Badge className="-ml-[2px] w-[25px] bg-[#4cc2ff] text-[13px] tracking-[-0.3px] text-black">56</Badge>
        </Task>
        <Task running>
          <Svg w={22} h={30}>
            <path d="M0 3H22V27H0Z" fill="#58bcd6" /><path d="M0 26H22V28H0Z" fill="#fff" /><path d="M0 28H22V30H0Z" fill="#b25a14" />
            <path d="M4 9H18M4 14H18M4 19H18" stroke="#0f6f90" strokeWidth="1.8" />
            <path d="M3.5 1.4V3M8.5 1.4V3M13.5 1.4V3M18.5 1.4V3" stroke="#177391" strokeWidth="2.8" strokeLinecap="round" />
          </Svg>
        </Task>
        <Task running>
          <Svg w={30}>
            <circle cx="11.5" cy="12" r="11.7" fill="#fb3a14" />
            <path d="M3.6 7.2H7.6L10 16.4L12.4 9.4H14.4L16.2 16.4L19 7.2H13.6M5.6 7.6L8.4 16.8H10.4L13 9" stroke="#fff" strokeWidth="1.5" />
            <path d="M16 16H26L29.4 19.4V30H16Z" fill="#5b93ee" />
            <path d="M18.6 20.6V26.6L22.6 23L26.6 26.6V20.6" stroke="#fff" strokeWidth="1.7" />
          </Svg>
        </Task>
        <Task running>
          <Chrome />
          <Badge className="w-5 bg-[#ec3d78] font-[Roboto,sans-serif] text-[12px] font-bold text-[#ffc0d6]">C</Badge>
        </Task>
        <Task running>
          <Svg w={26}>
            <defs><linearGradient id="ph" x1="0" y1="1" x2="1" y2="0"><stop stopColor="#0e73d6" /><stop offset=".5" stopColor="#2b63be" /><stop offset="1" stopColor="#8a55b4" /></linearGradient></defs>
            <rect width="26" height="26" rx="2" fill="url(#ph)" />
            <path d="M0 24L11 11.4Q13.4 9 15.6 11.4L26 22V24Q26 26 24 26H2Q0 26 0 24Z" fill="#138be0" />
            <path d="M1 25.2L11.4 13Q13.4 11 15.4 13L18.4 16L9 26H2Z" fill="#3cc8f4" />
            <circle cx="19.4" cy="4.6" r="2.6" fill="#e8f1fb" />
          </Svg>
        </Task>
        <Task running>
          <Svg w={30}>
            <path d="M21 8.2L4 21.8Q3 22.4 2 21.6L.6 20.2Q-.2 19.2 .8 18.4L21.4 .4Z" fill="#0a6cb4" />
            <path d="M21 21.8L4 8.2Q3 7.6 2 8.4L.6 9.8Q-.2 10.8 .8 11.6L21.4 29.6Z" fill="#1484cf" />
            <path d="M21 .4Q21.6 -.2 22.8 .4L28.8 3.2Q30 3.8 30 5V25Q30 26.2 28.8 26.8L22.8 29.6Q21.6 30.2 21 29.6Z" fill="#27a1ee" />
          </Svg>
        </Task>
      </div>
      <div className="mr-[26px] ml-auto flex items-center text-[14.3px] leading-5 text-[#f4f4f4]">
        <Chev dir="up" w={17} sw={1.3} className="mr-[26px]" />
        <div className="flex w-[32px] flex-col items-center tracking-[-0.4px]"><span>ENG</span><span>IN</span></div>
        <Svg w={20} h={16} className="ml-[21px]">
          <g stroke="#f4f4f4" strokeWidth="1.4"><path d="M.8 6Q10 -3.4 19.2 6M3.4 8.8Q10 2 16.6 8.8M6.2 11.6Q10 7.6 13.8 11.6" /></g>
          <circle cx="10" cy="13.4" r="1.9" fill="#f4f4f4" />
        </Svg>
        <Svg w={20} h={16} className="ml-[10px]">
          <path d="M.7 5.4H3.6L8 1.4V14.6L3.6 10.6H.7Z" stroke="#f4f4f4" strokeWidth="1.3" />
          <path d="M10.6 5.4Q12.2 8 10.6 10.6M13 3Q16 8 13 13" stroke="#f4f4f4" strokeWidth="1.3" />
          <path d="M15.8 1Q20.4 8 15.8 15" stroke="#666" strokeWidth="1.2" />
        </Svg>
        <Svg w={20} h={14} className="ml-[10px]">
          <rect x=".7" y="1.4" width="16" height="11.2" rx="2.6" stroke="#f4f4f4" strokeWidth="1.4" />
          <rect x="2.8" y="3.4" width="3.4" height="7.2" rx=".8" fill="#f4f4f4" />
          <path d="M18 5V9Q19.6 8.4 19.6 7Q19.6 5.6 18 5Z" fill="#f4f4f4" stroke="#f4f4f4" />
        </Svg>
        <div className="ml-[16px] flex w-[82px] flex-col items-end pb-px whitespace-nowrap"><span className="tracking-[-0.1px]">18:03</span><span className="tracking-[0.25px]">04-07-2025</span></div>
        <Svg w={18} h={20} className="mb-px ml-[11px]">
          <path d="M10 3.4Q3 2.6 3 9V12L1 15.4H16.4L14.8 12.4V11M6.4 15.8Q8.6 19.8 11 15.8" stroke="#f4f4f4" strokeWidth="1.4" />
          <path d="M7 7.6H11L7 12H11M12.6 2.4H16.6L12.6 7H16.6" stroke="#f4f4f4" strokeWidth="1.3" />
        </Svg>
      </div>
    </div>
  );
}

export default function App() {
  return (
    <div className={`relative flex h-[1080px] w-[1920px] flex-col overflow-hidden bg-[#0e1117] ${ui}`}>
      <TabStrip />
      <AddressRow />
      <StreamlitPage />
      <Taskbar />
      <Dialog />
    </div>
  );
}
